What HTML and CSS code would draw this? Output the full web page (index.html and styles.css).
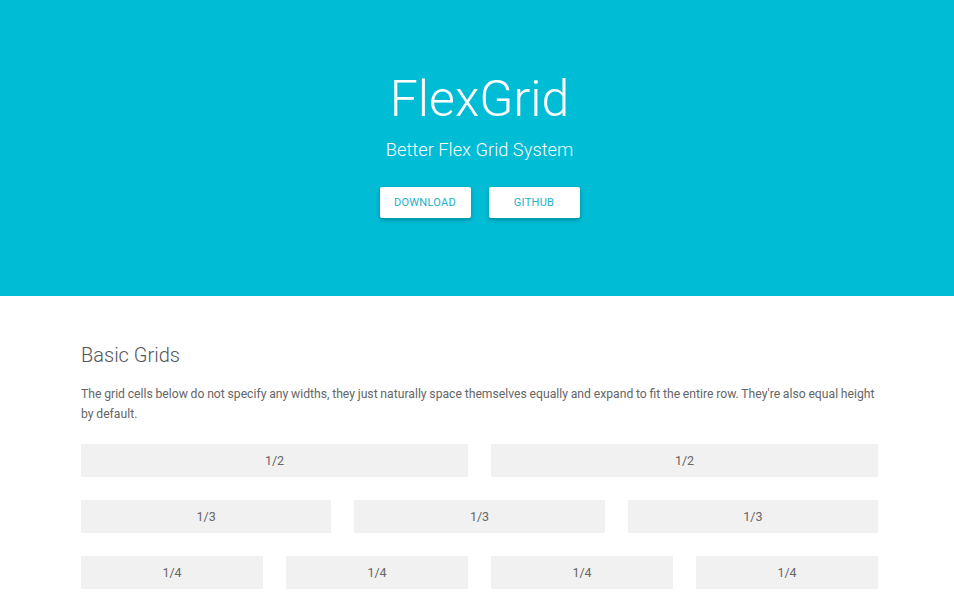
FILE: index.html
```html
<!DOCTYPE html>
<html>
<head>
<meta charset="utf-8">
<link rel="stylesheet" href="styles.css">
</head>
<body>
<header class="hero">
  <h1 class="hero-title">FlexGrid</h1>
  <p class="hero-sub">Better Flex Grid System</p>
  <div class="hero-actions">
    <a class="btn">DOWNLOAD</a>
    <a class="btn">GITHUB</a>
  </div>
</header>
<main class="content">
  <h2 class="section-title">Basic Grids</h2>
  <p class="section-text">The grid cells below do not specify any widths, they just naturally space themselves equally and expand to fit the entire row. They're also equal height by default.</p>
  <div class="grid-row">
    <div class="cell">1/2</div><div class="cell">1/2</div>
  </div>
  <div class="grid-row">
    <div class="cell">1/3</div><div class="cell">1/3</div><div class="cell">1/3</div>
  </div>
  <div class="grid-row">
    <div class="cell">1/4</div><div class="cell">1/4</div><div class="cell">1/4</div><div class="cell">1/4</div>
  </div>
</main>
</body>
</html>
```
FILE: styles.css
```css
* { box-sizing: border-box; }
html, body { margin: 0; padding: 0; }
body {
  font-family: Roboto, "Liberation Sans", sans-serif;
  background: #fff;
  color: #555;
}
.hero {
  background: #00bcd4;
  height: 296px;
  display: flex;
  flex-direction: column;
  align-items: center;
  padding-top: 69px;
  padding-left: 5px;
  color: #fff;
}
.hero-title {
  margin: 0;
  font-size: 50px;
  font-weight: 300;
  line-height: 60px;
}
.hero-sub {
  margin: 9px 0 0;
  font-size: 18.3px;
  font-weight: 300;
  line-height: 24px;
}
.hero-actions {
  display: flex;
  gap: 18px;
  margin-top: 25px;
}
.btn {
  display: flex;
  align-items: center;
  justify-content: center;
  width: 91px;
  height: 31px;
  background: #fff;
  color: #20b2c8;
  font-size: 11px;
  font-weight: 400;
  letter-spacing: 0.3px;
  border-radius: 2px;
  box-shadow: 0 2px 4px rgba(0,0,0,0.25);
}
.content {
  width: 797px;
  margin-left: 81px;
  padding-top: 44px;
}
.section-title {
  margin: 0;
  font-size: 20px;
  font-weight: 300;
  line-height: 30px;
  color: #555;
}
.section-text {
  margin: 14px 0 0;
  font-size: 12.2px;
  word-spacing: -0.3px;
  line-height: 20px;
  color: #666;
  font-weight: 400;
}
.grid-row {
  display: flex;
  gap: 23px;
  margin-top: 23px;
}
.section-text + .grid-row { margin-top: 20px; }
.cell {
  flex: 1;
  height: 33px;
  background: #f1f1f1;
  display: flex;
  align-items: center;
  justify-content: center;
  font-size: 12.5px;
  color: #666;
}
```
